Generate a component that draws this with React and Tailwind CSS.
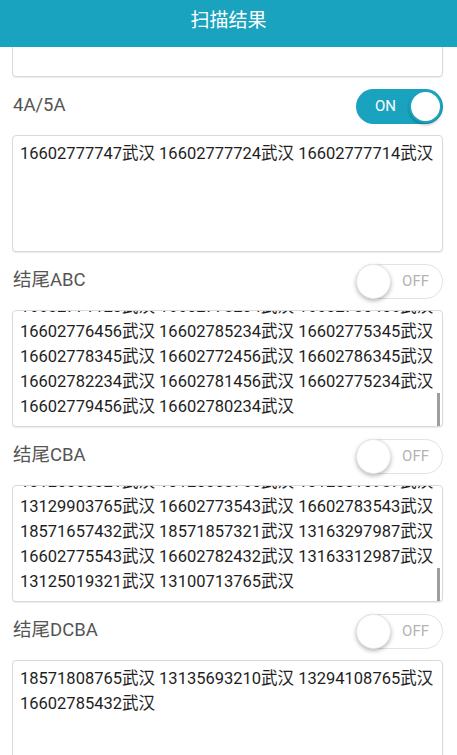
import React from "react";

const sections = [
  {
    label: "4A/5A",
    on: true,
    lines: ["16602777747武汉 16602777724武汉 16602777714武汉"],
  },
  {
    label: "结尾ABC",
    on: false,
    scrolled: true,
    lines: [
      "16602771123武汉 16602778234武汉 16602780456武汉",
      "16602776456武汉 16602785234武汉 16602775345武汉",
      "16602778345武汉 16602772456武汉 16602786345武汉",
      "16602782234武汉 16602781456武汉 16602775234武汉",
      "16602779456武汉 16602780234武汉",
    ],
  },
  {
    label: "结尾CBA",
    on: false,
    scrolled: true,
    lines: [
      "13125003321武汉 13125003765武汉 13125010987武汉",
      "13129903765武汉 16602773543武汉 16602783543武汉",
      "18571657432武汉 18571857321武汉 13163297987武汉",
      "16602775543武汉 16602782432武汉 13163312987武汉",
      "13125019321武汉 13100713765武汉",
    ],
  },
  {
    label: "结尾DCBA",
    on: false,
    lines: ["18571808765武汉 13135693210武汉 13294108765武汉", "16602785432武汉"],
  },
];

const Toggle = ({ on }) =>
  on ? (
    <div className="relative flex h-[35px] w-[87px] items-center rounded-full bg-[#1aa3bf]">
      <span className="ml-[19px] text-[15px] text-white">ON</span>
      <div className="absolute right-[1px] top-[1px] h-[33px] w-[33px] rounded-full border-2 border-[#1aa3bf] bg-white shadow-[0_2px_3px_rgba(0,0,0,0.25)]" />
    </div>
  ) : (
    <div className="relative flex h-[35px] w-[87px] items-center justify-end rounded-full border border-[#e2e2e2] bg-white">
      <span className="mr-[13px] text-[15px] text-[#b3b3b3]">OFF</span>
      <div className="absolute left-[-1px] top-[-1px] h-[35px] w-[35px] rounded-full border border-[#e6e6e6] bg-white shadow-[0_2px_4px_rgba(0,0,0,0.28)]" />
    </div>
  );

const TextBox = ({ lines = [], scrolled }) => (
  <div className="relative h-[117px] overflow-hidden rounded-[4px] border border-[#d9d9d9] bg-white shadow-[0_1px_1px_rgba(0,0,0,0.08)]">
    <div className={`px-[7px] pt-[5px] text-[16.5px] leading-[25px] text-[#1e1e1e] ${scrolled ? "-mt-[22px]" : ""}`}>
      {lines.map((line) => (
        <p key={line} className="whitespace-nowrap">{line}</p>
      ))}
    </div>
    {scrolled ? <div className="absolute right-[2px] top-[82px] h-[33px] w-[3px] bg-[#9e9e9e]" /> : null}
  </div>
);

export default function App() {
  return (
    <div className="h-[755px] w-[457px] overflow-hidden bg-white font-[Roboto,'Noto_Sans_CJK_SC',sans-serif]">
      <header className="flex h-[47px] items-center justify-center bg-[#19a3bf] pb-[5px] text-[19px] text-white">
        扫描结果
      </header>
      <div className="h-[708px] overflow-hidden">
        <div className="-mt-[87px] pl-[12px] pr-[14px]">
          <TextBox lines={[]} />
          {sections.map((section) => (
            <div key={section.label}>
              <div className="flex h-[58px] items-center justify-between">
                <span className="pl-[1px] text-[18.5px] text-[#555555]">{section.label}</span>
                <Toggle on={section.on} />
              </div>
              <TextBox lines={section.lines} scrolled={section.scrolled} />
            </div>
          ))}
        </div>
      </div>
    </div>
  );
}
